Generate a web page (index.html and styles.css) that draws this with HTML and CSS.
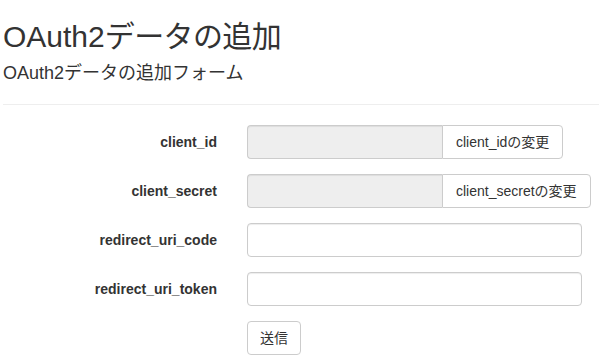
FILE: index.html
```html
<!DOCTYPE html>
<html lang="ja">
<head>
<meta charset="utf-8">
<title>OAuth2データの追加</title>
<link rel="stylesheet" href="styles.css">
</head>
<body>
<div class="page">
  <h2 class="title">OAuth2<span class="jp-lg">データの追加</span></h2>
  <h4 class="subtitle">OAuth2<span class="jp-md">データの追加フォーム</span></h4>
  <hr class="divider">
  <form class="form">
    <div class="row">
      <label class="label">client_id</label>
      <div class="group">
        <input class="input input-ro" type="text" readonly>
        <button type="button" class="btn btn-addon">client_idの変更</button>
      </div>
    </div>
    <div class="row">
      <label class="label">client_secret</label>
      <div class="group">
        <input class="input input-ro" type="text" readonly>
        <button type="button" class="btn btn-addon">client_secretの変更</button>
      </div>
    </div>
    <div class="row">
      <label class="label">redirect_uri_code</label>
      <input class="input input-full" type="text">
    </div>
    <div class="row">
      <label class="label">redirect_uri_token</label>
      <input class="input input-full" type="text">
    </div>
    <div class="row">
      <span class="label"></span>
      <div><button type="submit" class="btn">送信</button></div>
    </div>
  </form>
</div>
</body>
</html>
```

FILE: styles.css
```css
* { box-sizing: border-box; }
html, body {
  margin: 0;
  padding: 0;
  background: #fff;
}
body {
  font-family: "Liberation Sans", Arial, "Noto Sans CJK JP", sans-serif;
  font-size: 14px;
  line-height: 20px;
  color: #333;
}
.page {
  padding-left: 3px;
}
.title {
  margin: 20px 0 0;
  font-size: 30px;
  font-weight: normal;
  line-height: 33px;
}
.jp-lg { letter-spacing: -0.6px; }
.subtitle {
  margin: 10px 0 0;
  font-size: 18px;
  font-weight: normal;
  line-height: 20px;
}
.jp-md { letter-spacing: 0; }
.divider {
  margin: 21px 0 20px;
  border: 0;
  border-top: 1px solid #eee;
  height: 0;
}
.form {
  display: flex;
  flex-direction: column;
  gap: 15px;
}
.row {
  display: grid;
  grid-template-columns: 214px 335px;
  column-gap: 30px;
  align-items: start;
}
.label {
  text-align: right;
  font-weight: bold;
  padding-top: 7px;
  line-height: 20px;
}
.group {
  display: flex;
}
.input {
  height: 34px;
  padding: 6px 12px;
  font: inherit;
  color: #555;
  background: #fff;
  border: 1px solid #ccc;
  border-radius: 4px;
  box-shadow: inset 0 1px 1px rgba(0,0,0,0.075);
  outline: none;
}
.input-full { width: 335px; }
.input-ro {
  width: 195px;
  flex: none;
  background: #eee;
  border-radius: 4px 0 0 4px;
  border-right: 0;
}
.btn {
  height: 34px;
  padding: 6px 12px;
  font: inherit;
  line-height: 20px;
  color: #333;
  background: #fff;
  border: 1px solid #ccc;
  border-radius: 4px;
  white-space: nowrap;
  cursor: pointer;
}
.btn-addon {
  padding: 6px 13px;
  border-radius: 0 4px 4px 0;
}
```
